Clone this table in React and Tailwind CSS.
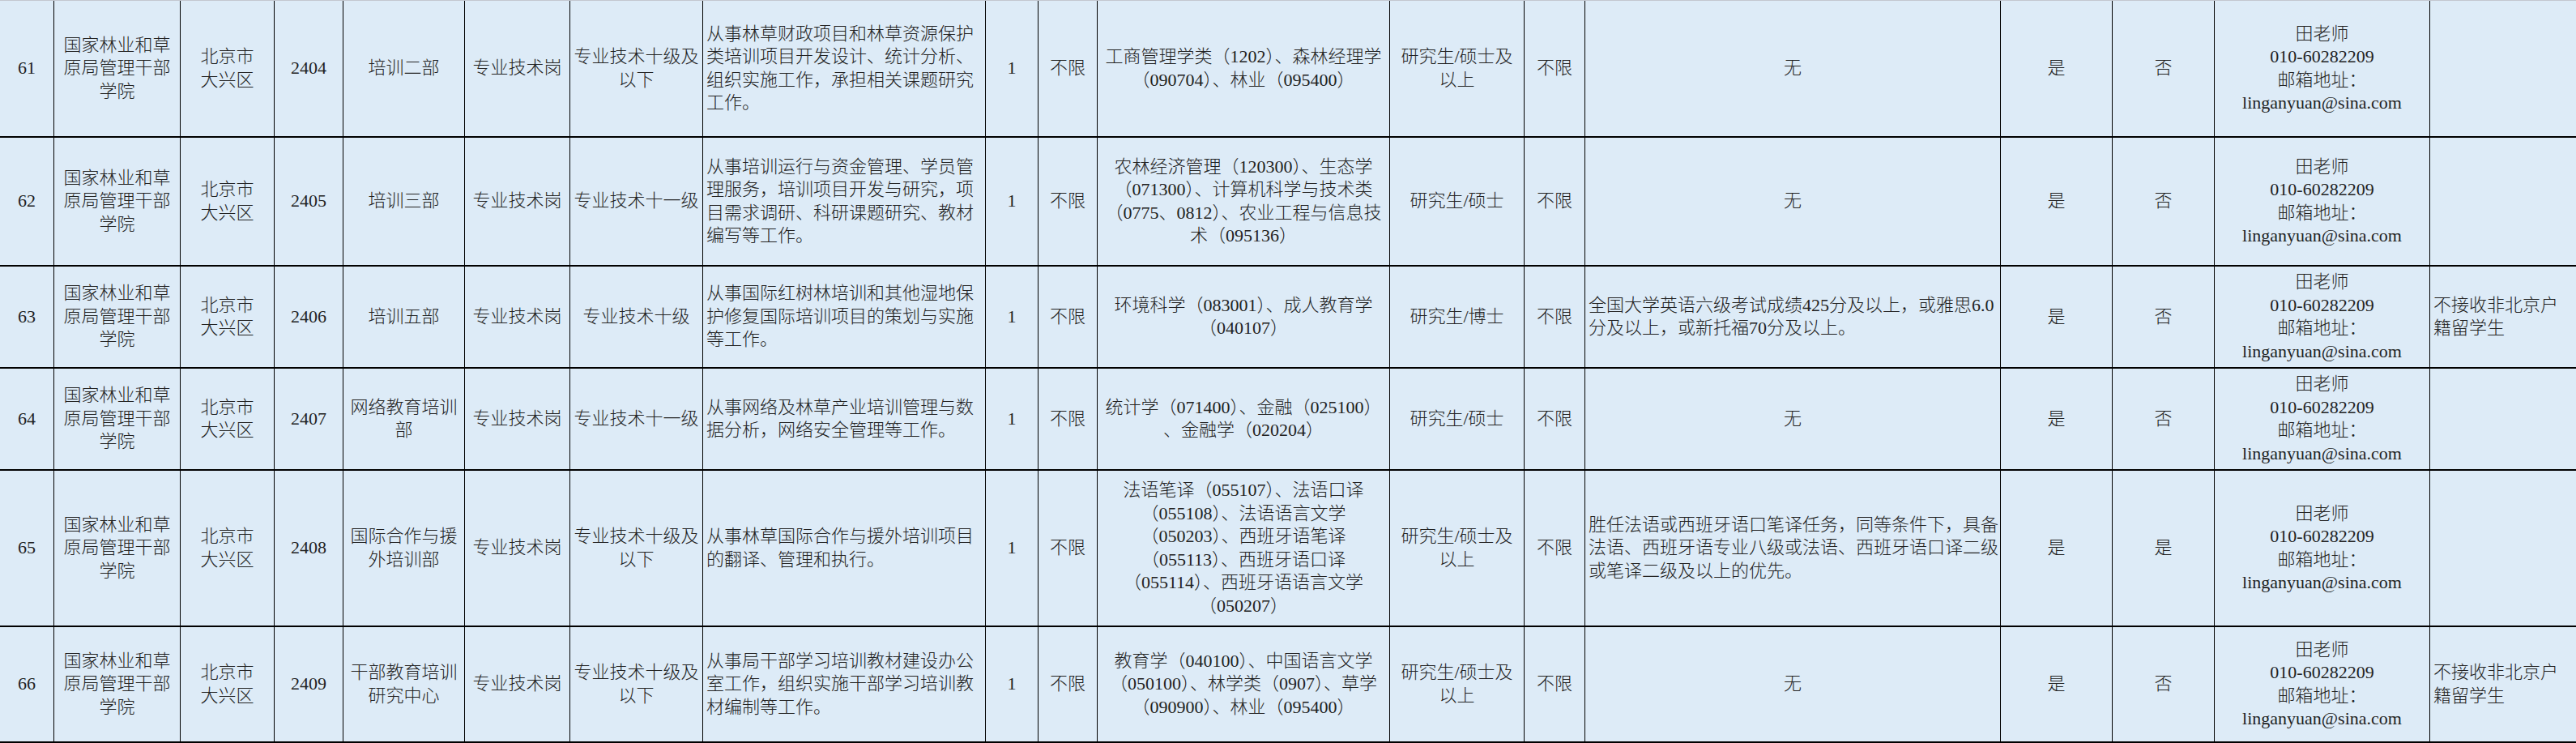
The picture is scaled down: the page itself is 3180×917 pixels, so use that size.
import React from 'react';

// ===== 岗位表（第61-66行） =====
const ROWS = [
  {
    no: '61',
    code: '2404',
    dept: ['培训二部'],
    level: ['专业技术十级及', '以下'],
    desc: ['从事林草财政项目和林草资源保护', '类培训项目开发设计、统计分析、', '组织实施工作，承担相关课题研究', '工作。'],
    majors: ['工商管理学类（1202）、森林经理学', '（090704）、林业（095400）'],
    edu: ['研究生/硕士及', '以上'],
    other: ['无'],
    otherLeft: false,
    a: '是',
    b: '否',
    remark: [],
  },
  {
    no: '62',
    code: '2405',
    dept: ['培训三部'],
    level: ['专业技术十一级'],
    desc: ['从事培训运行与资金管理、学员管', '理服务，培训项目开发与研究，项', '目需求调研、科研课题研究、教材', '编写等工作。'],
    majors: ['农林经济管理（120300）、生态学', '（071300）、计算机科学与技术类', '（0775、0812）、农业工程与信息技', '术（095136）'],
    edu: ['研究生/硕士'],
    other: ['无'],
    otherLeft: false,
    a: '是',
    b: '否',
    remark: [],
  },
  {
    no: '63',
    code: '2406',
    dept: ['培训五部'],
    level: ['专业技术十级'],
    desc: ['从事国际红树林培训和其他湿地保', '护修复国际培训项目的策划与实施', '等工作。'],
    majors: ['环境科学（083001）、成人教育学', '（040107）'],
    edu: ['研究生/博士'],
    other: ['全国大学英语六级考试成绩425分及以上，或雅思6.0', '分及以上，或新托福70分及以上。'],
    otherLeft: true,
    a: '是',
    b: '否',
    remark: ['不接收非北京户', '籍留学生'],
  },
  {
    no: '64',
    code: '2407',
    dept: ['网络教育培训', '部'],
    level: ['专业技术十一级'],
    desc: ['从事网络及林草产业培训管理与数', '据分析，网络安全管理等工作。'],
    majors: ['统计学（071400）、金融（025100）', '、金融学（020204）'],
    edu: ['研究生/硕士'],
    other: ['无'],
    otherLeft: false,
    a: '是',
    b: '否',
    remark: [],
  },
  {
    no: '65',
    code: '2408',
    dept: ['国际合作与援', '外培训部'],
    level: ['专业技术十级及', '以下'],
    desc: ['从事林草国际合作与援外培训项目', '的翻译、管理和执行。'],
    majors: ['法语笔译（055107）、法语口译', '（055108）、法语语言文学', '（050203）、西班牙语笔译', '（055113）、西班牙语口译', '（055114）、西班牙语语言文学', '（050207）'],
    edu: ['研究生/硕士及', '以上'],
    other: ['胜任法语或西班牙语口笔译任务，同等条件下，具备', '法语、西班牙语专业八级或法语、西班牙语口译二级', '或笔译二级及以上的优先。'],
    otherLeft: true,
    a: '是',
    b: '是',
    remark: [],
  },
  {
    no: '66',
    code: '2409',
    dept: ['干部教育培训', '研究中心'],
    level: ['专业技术十级及', '以下'],
    desc: ['从事局干部学习培训教材建设办公', '室工作，组织实施干部学习培训教', '材编制等工作。'],
    majors: ['教育学（040100）、中国语言文学', '（050100）、林学类（0907）、草学', '（090900）、林业（095400）'],
    edu: ['研究生/硕士及', '以上'],
    other: ['无'],
    otherLeft: false,
    a: '是',
    b: '否',
    remark: ['不接收非北京户', '籍留学生'],
  },
];

const CONTACT = ['田老师', '010-60282209', '邮箱地址：', 'linganyuan@sina.com'];

// Cell: one grid cell, content centred vertically
const Cell = ({ lines, left = false, last = false }) => (
  <div
    className={`flex flex-col justify-center overflow-visible border-b-2 border-black ${last ? '' : 'border-r'} ${
      left ? 'items-start pl-1' : 'items-center text-center'
    }`}
  >
    {lines.map((l, i) => (
      <span key={i} className="whitespace-nowrap">
        {l}
      </span>
    ))}
  </div>
);

export default function App() {
  return (
    <div
      className="w-[3180px] h-[917px] overflow-hidden bg-[#ddebf7] text-[#222] border-t border-[#c3c7cf] text-[22px] leading-[28.5px] font-light"
      style={{ fontFamily: '"Liberation Serif", "Noto Sans CJK SC", serif' }}
    >
      <div className="grid grid-cols-[67px_156px_116px_85px_150px_130px_164px_349px_65px_73px_361px_166px_75px_513px_138px_126px_266px_180px] grid-rows-[169px_159px_126px_126px_193px_143px]">
        {ROWS.map((r) => (
          <React.Fragment key={r.no}>
            <Cell lines={[r.no]} />
            <Cell lines={['国家林业和草', '原局管理干部', '学院']} />
            <Cell lines={['北京市', '大兴区']} />
            <Cell lines={[r.code]} />
            <Cell lines={r.dept} />
            <Cell lines={['专业技术岗']} />
            <Cell lines={r.level} />
            <Cell lines={r.desc} left />
            <Cell lines={['1']} />
            <Cell lines={['不限']} />
            <Cell lines={r.majors} />
            <Cell lines={r.edu} />
            <Cell lines={['不限']} />
            <Cell lines={r.other} left={r.otherLeft} />
            <Cell lines={[r.a]} />
            <Cell lines={[r.b]} />
            <Cell lines={CONTACT} />
            <Cell lines={r.remark} left last />
          </React.Fragment>
        ))}
      </div>
    </div>
  );
}
